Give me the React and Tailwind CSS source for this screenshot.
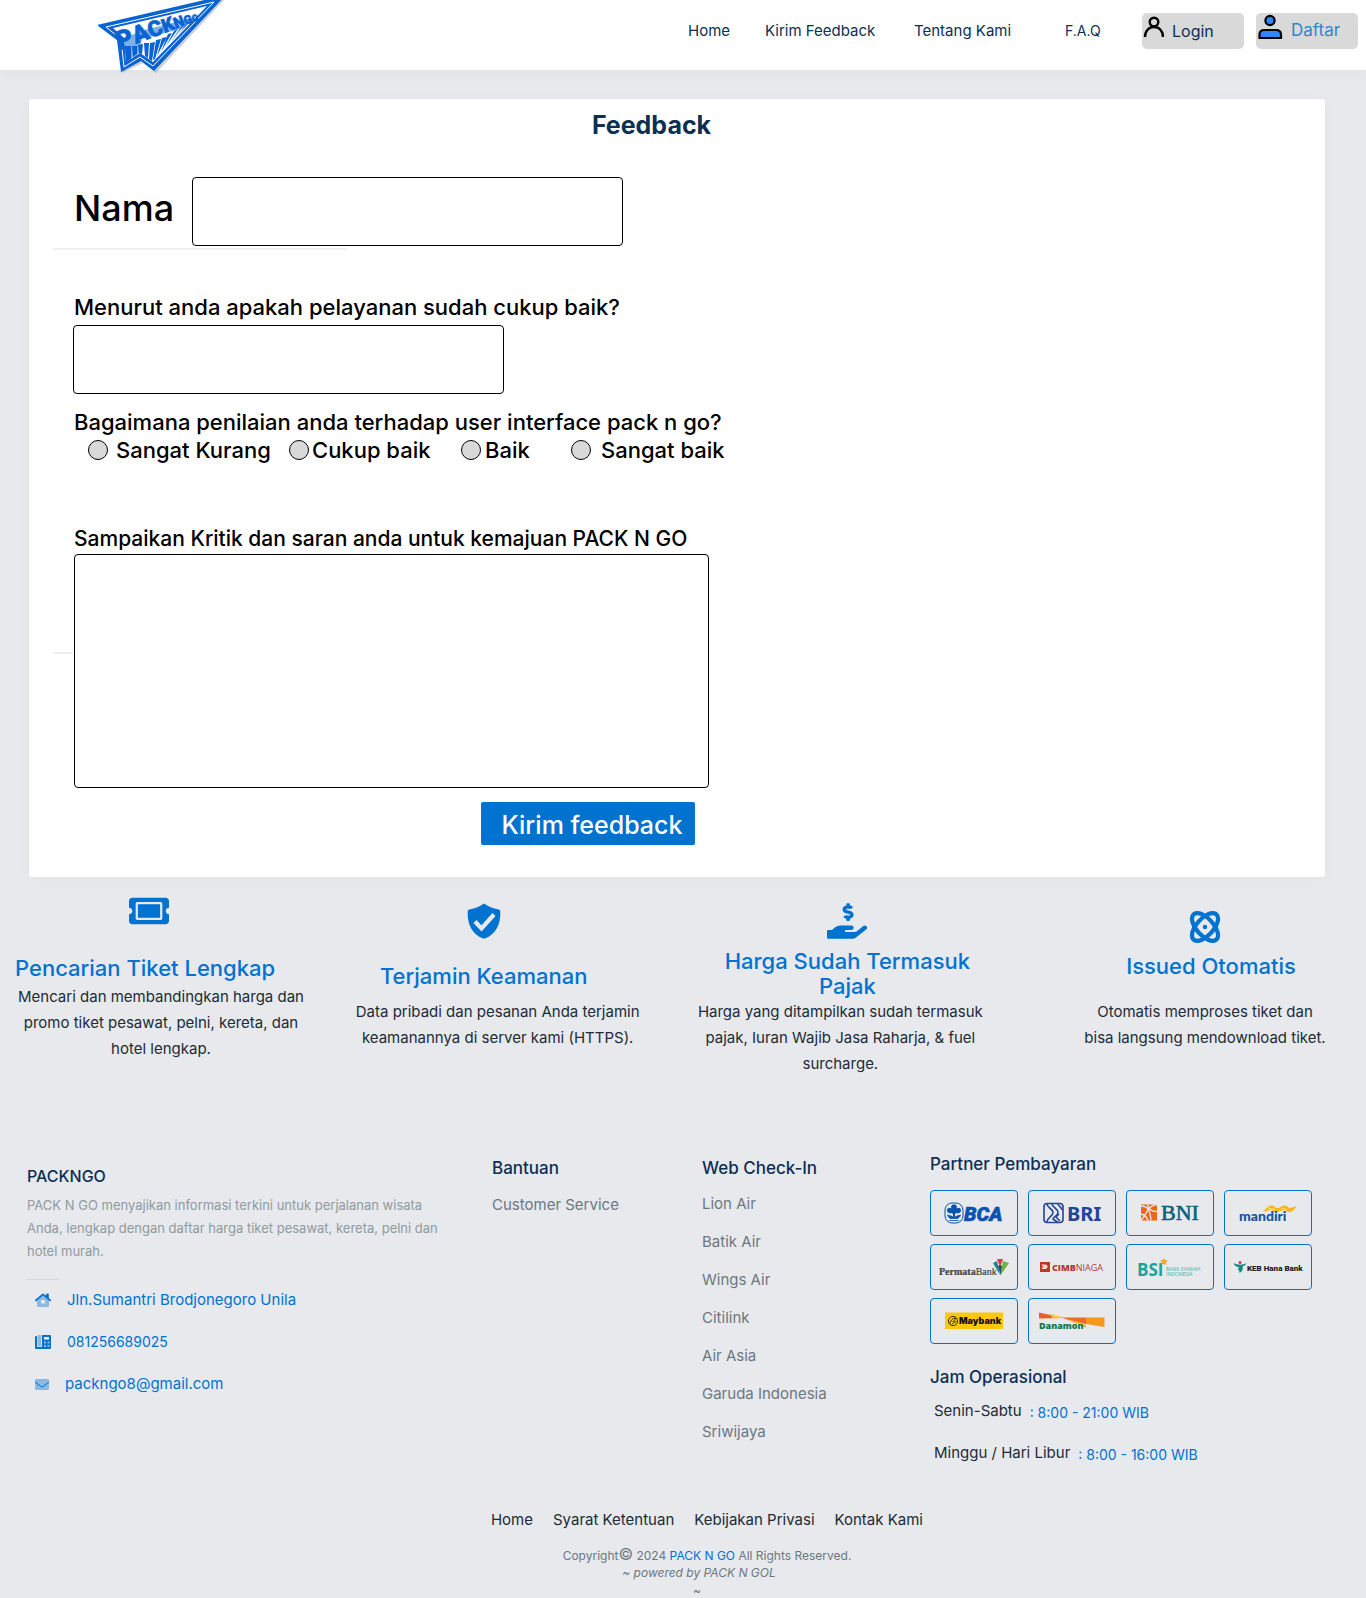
import React from "react";
import { FaTicketAlt, FaHandHoldingUsd } from "react-icons/fa";

function PlaneLogo() {
  return (
    <svg viewBox="0 0 130 74" className="h-[74px] w-[130px] shrink-0" role="img" aria-label="Pack N Go">
      <polygon points="0,26 129,-3 58,73 45,63 24,73 20,41" fill="#6b7a90" opacity="0.35" />
      <polygon points="-1,25 128,-5 56,71 43,61 23,72 19,40" fill="#0a63d2" />
      <polygon points="8,27 116,2 55,66 42,57 26,67 23,39" fill="none" stroke="#ffffff" strokeWidth="1" />
      <polygon points="15,28 109,6 55,62 42,53 28,62 26,38" fill="#ffffff" />
      <polygon points="26,38 46,30 41,53 28,62" fill="#7db0ea" />
      <polygon points="46,30 98,17 86,28 44,39" fill="#7db0ea" />
      <path
        d="M27 46h6v13L28 62zM34 46l5 0 0 8-4 3zM40 45l5-1-1 10-3-1zM46 43h5l-1 15-3-2zM52 43l5-1-3 19-3-2zM58 40l5-1-6 20-2 1zM64 38l5-1-10 19zM70 34l4-1-11 19zM76 31l4-2-12 17zM83 27l3-2-13 17zM90 22l3-2-13 15z"
        fill="#0a63d2"
      />
      <g fill="#0a63d2" stroke="#0a63d2" strokeWidth=".6" fontFamily="Roboto" fontWeight="900" transform="rotate(-21 25 50)">
        <text x="22" y="49">
          <tspan fontSize="26">P</tspan>
          <tspan fontSize="24">A</tspan>
          <tspan fontSize="22">C</tspan>
          <tspan fontSize="19">K</tspan>
          <tspan fontSize="15">N</tspan>
          <tspan fontSize="12">G</tspan>
          <tspan fontSize="9">O</tspan>
        </text>
      </g>
    </svg>
  );
}

function LoginIcon() {
  return (
    <svg viewBox="0 0 22 22" className="h-[22px] w-[22px]" fill="none" stroke="#000" strokeWidth="2.400" aria-hidden="true">
      <circle cx="12" cy="6" r="4.300" />
      <path d="M3 21c0-6 3.800-10 9-10s9 4 9 10" />
    </svg>
  );
}

function RegisterIcon() {
  return (
    <svg viewBox="0 0 26 26" className="h-[26px] w-[26px]" fill="#2f86ff" stroke="#000" strokeWidth="2.200" aria-hidden="true">
      <circle cx="13" cy="6.500" r="4.600" />
      <path d="M2.500 24v-3.500c0-3 2-4.500 5-4.500h11.500c3 0 5 1.500 5 4.500V24z" />
    </svg>
  );
}

function ShieldIcon() {
  return (
    <svg viewBox="0 0 34 36" className="h-[36px] w-[34px]" aria-hidden="true">
      <path d="M17 0.500c4 3 9 5 14.500 6 1.200.3 1.800 1 1.800 2.200C33.800 21 29 31 18.500 35.300c-1 .4-2 .4-3 0C5 31 .2 21 .7 8.700.7 7.500 1.300 6.800 2.500 6.500 8 5.500 13 3.500 17 .5z" fill="#0072d0" />
      <path d="m8 18.500 6.500 7L27 11.500" fill="none" stroke="#e7e9ed" strokeWidth="4.200" />
    </svg>
  );
}

function AtomIcon() {
  return (
    <svg viewBox="0 0 32 32" className="h-8 w-8" fill="none" stroke="#0072d0" strokeWidth="4.200" aria-hidden="true">
      <ellipse cx="16" cy="16" rx="17" ry="8.500" transform="rotate(48 16 16)" />
      <ellipse cx="16" cy="16" rx="17" ry="8.500" transform="rotate(-48 16 16)" />
      <circle cx="16" cy="16" r="2.200" fill="#0072d0" stroke="none" />
    </svg>
  );
}

function HouseIcon() {
  return (
    <svg viewBox="0 0 16 14" className="h-[14px] w-4" aria-hidden="true">
      <path d="M2 7 8 2l6 5v6a1 1 0 0 1-1 1H3a1 1 0 0 1-1-1z" fill="#8bb9e2" />
      <rect x="6" y="7" width="4" height="3.500" rx=".6" fill="#e7e9ed" />
      <path d="M.8 7.400 8 1.400l7.200 6" fill="none" stroke="#0072d0" strokeWidth="1.800" strokeLinecap="round" />
      <path d="M11 .800h2.800v5L11 3.500z" fill="#0072d0" />
    </svg>
  );
}

function PhoneIcon() {
  return (
    <svg viewBox="0 0 16 14" className="h-[14px] w-4" aria-hidden="true">
      <path d="M0 1.200h2V12h5V0h8a1 1 0 0 1 1 1v12a1 1 0 0 1-1 1H1a1 1 0 0 1-1-1z" fill="#0072d0" />
      <rect x="2.600" y="0" width="3.600" height="11.500" rx=".8" fill="#8bb9e2" />
      <rect x="9" y="2" width="5" height="2.600" fill="#e7e9ed" />
      <path d="M9 6.500h2v2H9zM12.500 6.500h2v2h-2zM9 10h2v2H9zM12.500 10h2v2h-2z" fill="#8bb9e2" />
    </svg>
  );
}

function MailIcon() {
  return (
    <svg viewBox="0 0 14 11" className="h-[11px] w-[14px]" aria-hidden="true">
      <rect width="14" height="11" rx="1.200" fill="#8bb9e2" />
      <path d="m0 3 5.300 4c1.200.9 2.200.9 3.400 0L14 3" fill="none" stroke="#0072d0" strokeWidth="1" />
    </svg>
  );
}

const banks = [
  {
    name: "BCA",
    art: (
      <>
        <rect x="15" y="13" width="18" height="20" rx="7" fill="none" stroke="#0a52b0" strokeWidth="1" />
        <path d="M24 14.500c2.500 0 3.500 2 2.500 4 2-1.500 4.500-.5 4.500 1.800 0 2.500-2.500 3.500-4.500 2.700L25 24v3h-2v-3l-1.500-1c-2 .8-4.500-.2-4.500-2.700 0-2.300 2.500-3.300 4.500-1.800-1-2 0-4 2.500-4z" fill="#0a52b0" />
        <path d="M17.500 25c3 .5 4.500 1.500 6.500 2.500 2-1 3.500-2 6.500-2.500-.5 2-2 3-3 3.500h-7c-1-.5-2.500-1.500-3-3.500zM19 30.500h10" fill="#0a52b0" stroke="#0a52b0" strokeWidth=".8" />
        <text x="34" y="31" fontSize="20" fontWeight="900" fontStyle="italic" fontFamily="Roboto" fill="#0a52b0" stroke="#0a52b0" strokeWidth=".6">BCA</text>
      </>
    ),
  },
  {
    name: "BRI",
    art: (
      <>
        <rect x="16" y="13.500" width="19" height="19" rx="3" fill="none" stroke="#23449a" strokeWidth="1.600" />
        <path d="M19 14c0 4 6 4.500 6 8.500s-6 5-6 9.500M24 14c0 3 6 4.500 6 8.500 0 3.500-5 4.500-5 6.500l5 3.500M30 14c0 2 4 3 4 6M31 24l-3 3 4 4" fill="none" stroke="#23449a" strokeWidth="1.600" />
        <text x="39" y="31" fontSize="20" fontWeight="700" fontFamily="Noto Sans" fill="#23449a">BRI</text>
      </>
    ),
  },
  {
    name: "BNI",
    art: (
      <>
        <rect x="15" y="14.500" width="16" height="16" fill="#e8671b" />
        <path d="M15 16c7 0 9 4 10 14.500M15 24c4 1 6 3 7 6.500M22 14.500c0 5 4 7 9 7M31 14.500c-8 1-8 5-16 16" fill="none" stroke="#e7e9ed" strokeWidth="1.300" />
        <text x="35" y="30" fontSize="22" fontFamily="Liberation Serif" fill="#0d6078" stroke="#0d6078" strokeWidth=".6">BNI</text>
      </>
    ),
  },
  {
    name: "mandiri",
    art: (
      <>
        <path d="M38 21.500c4 0 4-6.500 10-6 3 .3 3 3 6 2.500 3-.5 4-3 7-2.500 3 .5 3 3 5.500 2.500 2-.4 3-1.500 6-1.500-2 3-4 5-7 5.500-3 .3-3-2-6-2-3 .2-4 2-7 2s-3-2-6-2-4 2-8.500 1.500z" fill="#fbb416" />
        <path d="M44 17.500c2 1.500 3 2.500 7 1.500M57 18.500c2 0 4 0 6 1.500" fill="none" stroke="#fde25a" strokeWidth="1.500" />
        <text x="15" y="31" fontSize="14" fontWeight="900" fontFamily="Lato" fill="#15549c">mandiri</text>
      </>
    ),
  },
  {
    name: "PermataBank",
    art: (
      <>
        <path d="m67 15 6 0-3 8z" fill="#d43a4d" />
        <path d="m63 19 4-2 3 14z" fill="#1d7f97" />
        <path d="m73 17 6 2-9 13z" fill="#6cb545" />
        <path d="m68 22 2-1 2 1-1.500 9z" fill="#2d4a5c" />
        <text x="9" y="31" fontSize="10" fontFamily="Liberation Serif" fill="#444" stroke="#444" strokeWidth=".2">
          <tspan fontWeight="700">Permata</tspan>
          <tspan>Bank</tspan>
        </text>
      </>
    ),
  },
  {
    name: "CIMB Niaga",
    art: (
      <>
        <rect x="12" y="18" width="10" height="10" fill="#bd3a28" />
        <path d="M13.500 20.500H18l2 2.200-2 2.200h-4.500l1.500-2.200z" fill="#f4d9cf" />
        <text x="24" y="27" fontSize="9" fontFamily="Open Sans" fill="#b23a32">
          <tspan fontWeight="800">CIMB</tspan>
          <tspan>NIAGA</tspan>
        </text>
      </>
    ),
  },
  {
    name: "Bank Syariah Indonesia",
    art: (
      <>
        <text x="11" y="32" fontSize="17" fontWeight="700" fontFamily="Open Sans" fill="#17a598">BSI</text>
        <path d="m38 14 1.200 2 2.800.500-2 2 .500 2.500-2.500-1-2.500 1 .300-2.600-1.800-1.900 2.600-.500z" fill="#f5a535" />
        <text x="40" y="27" fontSize="5" fontFamily="Open Sans" fill="#3bb5aa">BANK SYARIAH</text>
        <text x="40" y="32" fontSize="5" fontFamily="Open Sans" fill="#3bb5aa">INDONESIA</text>
      </>
    ),
  },
  {
    name: "KEB Hana Bank",
    art: (
      <>
        <circle cx="16" cy="18.500" r="1.500" fill="#dd3150" />
        <path d="M9.500 19c4 2 9 2.500 13 0-1 2.500-3 3-4 3.500 1 2-.5 5.500-3 6.500 0-2-.5-3-2-4l2-1.500c-2.500-.5-5-1.500-6-4.500z" fill="#0f8a7c" />
        <text x="23" y="27" fontSize="8" fontWeight="900" fontFamily="Roboto" fill="#222">KEB Hana Bank</text>
      </>
    ),
  },
  {
    name: "Maybank",
    art: (
      <>
        <rect x="15" y="14.500" width="58" height="16.500" fill="#ffc80a" />
        <circle cx="23" cy="23" r="4.600" fill="none" stroke="#3a2d00" strokeWidth="1" />
        <path d="M20 25.500c.5-3.500 3-5.500 5.500-5.500-.5 2-1 3-3 3.500M22 26.500c1-2 2.500-2.500 4.500-3" fill="none" stroke="#3a2d00" strokeWidth="1" />
        <text x="29" y="26" fontSize="9" fontWeight="900" fontFamily="Inter" fill="#111">Maybank</text>
      </>
    ),
  },
  {
    name: "Danamon",
    art: (
      <>
        <path d="M11 14.500 36 20l-25 .500z" fill="#e8612c" />
        <path d="M21 15.500 38 20l-13 .300z" fill="#ffc928" />
        <path d="M34 19.500h24v10z" fill="#ee6a2a" />
        <path d="M36 20.500 58 29v-3z" fill="#ffc928" />
        <path d="M58 19.500h18.500V29L58 26z" fill="#f5991d" />
        <text x="11" y="31" fontSize="9" fontWeight="800" fontFamily="Open Sans" fill="#0b7a4b">Danamon</text>
      </>
    ),
  },
];

const airlines = ["Lion Air", "Batik Air", "Wings Air", "Citilink", "Air Asia", "Garuda Indonesia", "Sriwijaya"];

const headingClass = "text-[17px] leading-6 font-medium text-[#0c2f54]";
const featureTitleClass = "text-[22px] leading-[25px] font-medium whitespace-nowrap text-[#0072d0]";

export default function App() {
  return (
    <div className="min-h-screen overflow-x-hidden bg-[#e7e9ed] font-['Inter',sans-serif] text-[#212b36]">
      <header className="relative flex h-[70px] items-start bg-white pr-2 pl-[98px] shadow-[0_2px_12px_rgba(0,0,0,0.04)]">
        <PlaneLogo />
        <nav className="mt-[21px] ml-auto flex text-[15px] leading-5 text-[#0c2f54]">
          <a href="#home" className="w-[77px]">Home</a>
          <a href="#feedback" className="w-[149px]">Kirim Feedback</a>
          <a href="#tentang" className="w-[151px]">Tentang Kami</a>
          <a href="#faq" className="w-[77px] text-[14px]">F.A.Q</a>
        </nav>
        <div className="mt-[13px] flex gap-3 text-[16px]">
          <button type="button" className="flex h-9 w-[102px] items-start gap-2 rounded-[5px] bg-[#d9d9d9] pt-[3px] text-[#0c2f54]">
            <LoginIcon />
            <span className="pt-[3px] leading-6">Login</span>
          </button>
          <button type="button" className="flex h-9 w-[102px] items-start gap-2 rounded-[5px] bg-[#d9d9d9] pt-[1px] pl-[1px] text-[17px] text-[#2f86cc]">
            <RegisterIcon />
            <span className="pt-1 leading-6">Daftar</span>
          </button>
        </div>
      </header>

      <main>
        <form
          id="feedback"
          onSubmit={(e) => e.preventDefault()}
          className="relative mt-[29px] mr-[41px] ml-[29px] rounded-[3px] bg-white pt-2 pb-8 pl-[45px] text-[22px] leading-[30px] font-medium text-black shadow-[0_2px_12px_rgba(0,0,0,0.03)]"
        >
          <h1 className="pr-[96px] text-center text-[25px] leading-9 font-bold text-[#0c2f54]">Feedback</h1>

          <div className="mt-[34px] flex items-center">
            <label htmlFor="nama" className="w-[118px] pb-2 text-[36px] leading-[48px]">Nama</label>
            <input id="nama" type="text" className="h-[69px] w-[431px] rounded-[4px] border border-black bg-white px-3" />
          </div>
          <div className="mt-[2px] -ml-[21px] h-[2px] w-[294px] bg-[#efefef]" />

          <label htmlFor="pelayanan" className="mt-[42px] block">Menurut anda apakah pelayanan sudah cukup baik?</label>
          <input id="pelayanan" type="text" className="mt-[3px] -ml-px block h-[69px] w-[431px] rounded-[4px] border border-black bg-white px-3" />

          <fieldset className="mt-[13px]">
            <legend>Bagaimana penilaian anda terhadap user interface pack n go?</legend>
            <div className="-mt-0.5 ml-[14px] grid grid-cols-[201px_172px_110px_auto]">
              {[
                ["Sangat Kurang", "gap-2"],
                ["Cukup baik", "gap-[3px]"],
                ["Baik", "gap-1"],
                ["Sangat baik", "gap-2.5"],
              ].map(([label, gap]) => (
                <label key={label} className={`flex items-center whitespace-nowrap ${gap}`}>
                  <input type="radio" name="penilaian" value={label} className="h-5 w-5 appearance-none rounded-full border border-black bg-[#d9d9d9] checked:bg-[#0072d0]" />
                  {label}
                </label>
              ))}
            </div>
          </fieldset>

          <label htmlFor="saran" className="mt-[59px] block text-[21px]">Sampaikan Kritik dan saran anda untuk kemajuan PACK N GO</label>
          <div className="absolute top-[553px] left-6 h-[2px] w-5 bg-[#efefef]" />
          <textarea id="saran" className="block h-[234px] w-[635px] resize-none rounded-[4px] border border-black bg-white p-3" />

          <button type="submit" className="mt-[14px] ml-[407px] block h-[43px] w-[214px] rounded-[2px] bg-[#0072d0] pt-0.5 pl-2 text-[25px] leading-9 text-white">
            Kirim feedback
          </button>
        </form>

        <section className="grid grid-cols-[337fr_343fr_365fr_292fr] px-[15px] text-center text-[15px] leading-[26px]">
          <article className="w-[292px] pt-[16px]">
            <div className="flex justify-center pr-6"><FaTicketAlt className="h-9 w-10 text-[#0072d0]" /></div>
            <h2 className={`mt-[27px] pr-[34px] ${featureTitleClass}`}>Pencarian Tiket Lengkap</h2>
            <p className="mt-[3px]">Mencari dan membandingkan harga dan<br />promo tiket pesawat, pelni, kereta, dan<br />hotel lengkap.</p>
          </article>
          <article className="w-[292px] pt-[26px]">
            <div className="flex justify-center pr-7"><ShieldIcon /></div>
            <h2 className={`mt-[25px] pr-7 ${featureTitleClass}`}>Terjamin Keamanan</h2>
            <p className="mt-[10px]">Data pribadi dan pesanan Anda terjamin<br />keamanannya di server kami (HTTPS).</p>
          </article>
          <article className="w-[292px] pt-[26px]">
            <div className="flex justify-center pl-3.5"><FaHandHoldingUsd className="h-9 w-10 text-[#0072d0]" /></div>
            <h2 className={`mt-[10px] pl-3.5 ${featureTitleClass}`}>Harga Sudah Termasuk<br />Pajak</h2>
            <p>Harga yang ditampilkan sudah termasuk<br />pajak, Iuran Wajib Jasa Raharja, &amp; fuel<br />surcharge.</p>
          </article>
          <article className="w-[292px] pt-[34px]">
            <div className="flex justify-center"><AtomIcon /></div>
            <h2 className={`mt-[11px] pl-3 ${featureTitleClass}`}>Issued Otomatis</h2>
            <p className="mt-[20px]">Otomatis memproses tiket dan<br />bisa langsung mendownload tiket.</p>
          </article>
        </section>
      </main>

      <footer className="mt-[75px]">
        <div className="grid grid-cols-[465fr_210fr_228fr_409fr] px-[27px]">
          <section className="pt-[12px]">
            <h3 className="text-[16px] leading-6 font-medium text-[#0c2f54]">PACKNGO</h3>
            <p className="mt-[6px] text-[13px] leading-[23px] text-[#8d9ba0]">
              PACK N GO menyajikan informasi terkini untuk perjalanan wisata<br />Anda, lengkap dengan daftar harga tiket pesawat, kereta, pelni dan<br />hotel murah.
            </p>
            <hr className="mt-4 w-8 border-[#d3d6da]" />
            <address className="mt-[10px] ml-2 flex flex-col gap-[22px] text-[15px] leading-5 text-[#0072d0] not-italic">
              <a href="#alamat" className="flex items-center gap-4"><HouseIcon />Jln.Sumantri Brodjonegoro Unila</a>
              <a href="tel:081256689025" className="flex items-center gap-4 text-[14px]"><PhoneIcon />081256689025</a>
              <a href="mailto:packngo8@gmail.com" className="flex items-center gap-4"><MailIcon />packngo8@gmail.com</a>
            </address>
          </section>

          <section className="pt-1">
            <h3 className={headingClass}>Bantuan</h3>
            <a href="#cs" className="mt-[15px] block text-[15px] leading-5 text-[#6c7780]">Customer Service</a>
          </section>

          <section className="pt-1">
            <h3 className={headingClass}>Web Check-In</h3>
            <ul className="mt-[5px] text-[15px] leading-[38px] text-[#6c7780]">
              {airlines.map((name) => (
                <li key={name}><a href="#checkin">{name}</a></li>
              ))}
            </ul>
          </section>

          <section>
            <h3 className={headingClass}>Partner Pembayaran</h3>
            <ul className="mt-[14px] flex max-w-[382px] flex-wrap gap-x-[10px] gap-y-2">
              {banks.map((bank) => (
                <li key={bank.name} className="h-[46px] w-[88px] rounded-[4px] border border-[#0072d0]">
                  <svg viewBox="1 1 86 44" className="h-full w-full" role="img" aria-label={bank.name}>{bank.art}</svg>
                </li>
              ))}
            </ul>
            <h3 className={`mt-[21px] ${headingClass}`}>Jam Operasional</h3>
            <dl className="mt-3 ml-1 flex flex-col gap-5 text-[15px] leading-5">
              <div className="flex gap-2">
                <dt>Senin-Sabtu</dt>
                <dd className="pt-0.5 text-[14px] text-[#0072d0]">: 8:00 - 21:00 WIB</dd>
              </div>
              <div className="flex gap-2">
                <dt>Minggu / Hari Libur</dt>
                <dd className="pt-0.5 text-[14px] text-[#0072d0]">: 8:00 - 16:00 WIB</dd>
              </div>
            </dl>
          </section>
        </div>

        <nav className="mt-[45px] flex justify-center gap-5 pl-12 text-[15px] leading-5">
          <a href="#home">Home</a>
          <a href="#syarat">Syarat Ketentuan</a>
          <a href="#privasi">Kebijakan Privasi</a>
          <a href="#kontak">Kontak Kami</a>
        </nav>
        <div className="mt-4 pl-12 text-center text-[12px] leading-[17px] text-[#6c7780]">
          <p>Copyright<span className="text-[16px]">©</span> 2024 <a href="#home" className="text-[#0072d0]">PACK N GO</a> All Rights Reserved.</p>
          <p className="pr-4 italic">~ powered by PACK N GOL</p>
          <p className="mt-1 pr-5 leading-3">~</p>
        </div>
      </footer>
    </div>
  );
}
